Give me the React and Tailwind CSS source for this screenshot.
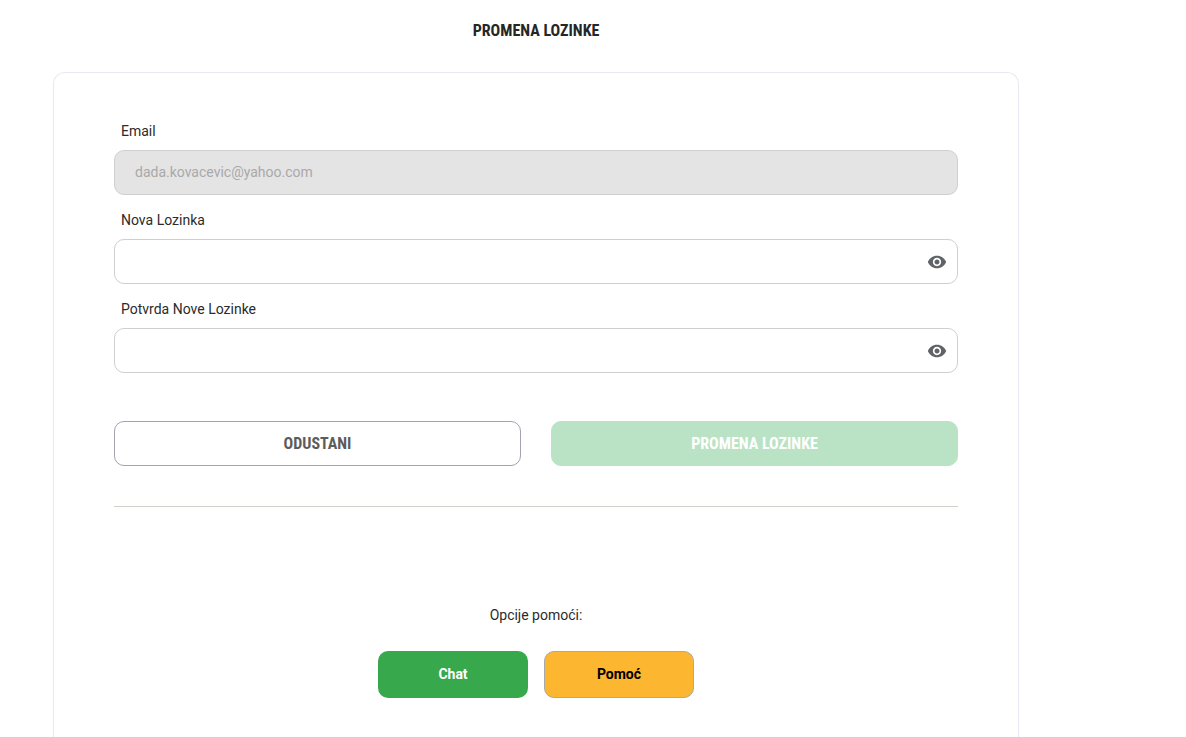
import React from "react";
import { MdVisibility } from "react-icons/md";

const Field = ({ label, value, disabled, hasEye }) => {
  return (
    <div className="flex flex-col">
      <label className="pl-[7px] h-[22px] text-[14px] leading-[22px] text-[#2b2b2b]">{label}</label>
      <div
        className={`flex items-center justify-between mt-[8px] h-[45px] pl-[20px] pr-[10px] rounded-[10px] border border-[#cfcfcf] ${
          disabled ? "bg-[#e4e4e4]" : "bg-white"
        }`}
      >
        <span className="text-[14px] text-[#a9a9a9]">{value}</span>
        {hasEye && <MdVisibility size={20} className="text-[#5f6368]" />}
      </div>
    </div>
  );
};

const App = () => {
  return (
    <div className="h-[737px] overflow-hidden bg-white font-['Roboto',sans-serif]">
      <h1 className="w-[1072px] pt-[22px] h-[72px] text-center text-[16px] leading-[18px] font-bold font-stretch-semi-condensed text-[#262626]">
        PROMENA LOZINKE
      </h1>

      <div className="ml-[53px] w-[966px] h-[700px] px-[60px] pt-[47px] rounded-t-[12px] border border-b-0 border-[#ebe6f2]">
        <div className="flex flex-col gap-[14px]">
          <Field label="Email" value="dada.kovacevic@yahoo.com" disabled />
          <Field label="Nova Lozinka" hasEye />
          <Field label="Potvrda Nove Lozinke" hasEye />
        </div>

        <div className="flex gap-[30px] mt-[48px]">
          <button className="flex-1 h-[45px] rounded-[10px] border border-[#a79fb5] bg-white text-[16px] font-bold font-stretch-semi-condensed text-[#5c5c5c]">
            ODUSTANI
          </button>
          <button className="flex-1 h-[45px] rounded-[10px] border border-[#b9e3c4] bg-[#b9e3c4] text-[16px] font-bold font-stretch-semi-condensed text-white">
            PROMENA LOZINKE
          </button>
        </div>

        <hr className="mt-[40px] border-t border-[#cdd3ca]" />

        <p className="mt-[99px] text-center text-[14px] leading-[18px] text-[#2b2b2b]">Opcije pomoći:</p>

        <div className="flex justify-center gap-[16px] mt-[27px]">
          <button className="w-[150px] h-[47px] rounded-[10px] bg-[#38a84c] text-[14px] font-bold text-white">
            Chat
          </button>
          <button className="w-[150px] h-[47px] rounded-[10px] border border-[#a9a9a9] bg-[#fdb62f] text-[14px] font-bold text-black">
            Pomoć
          </button>
        </div>
      </div>
    </div>
  );
};

export default App;
